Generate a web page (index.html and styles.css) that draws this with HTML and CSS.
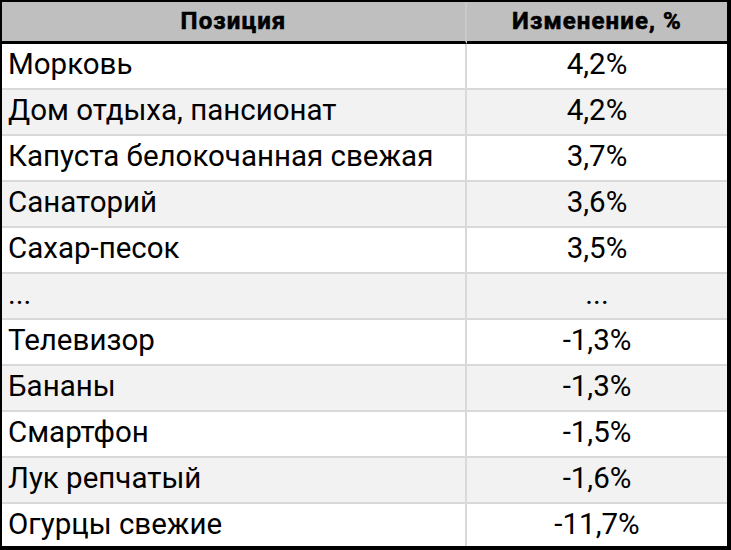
FILE: index.html
```html
<!DOCTYPE html>
<html lang="ru">
<head>
<meta charset="utf-8">
<link rel="stylesheet" href="styles.css">
</head>
<body>
<div class="frame">
<table class="grid">
<thead>
<tr><th class="c1">Позиция</th><th class="c2">Изменение, %</th></tr>
</thead>
<tbody>
<tr><td class="c1">Морковь</td><td class="c2">4,2%</td></tr>
<tr class="alt"><td class="c1">Дом отдыха, пансионат</td><td class="c2">4,2%</td></tr>
<tr><td class="c1">Капуста белокочанная свежая</td><td class="c2">3,7%</td></tr>
<tr class="alt"><td class="c1">Санаторий</td><td class="c2">3,6%</td></tr>
<tr><td class="c1">Сахар-песок</td><td class="c2">3,5%</td></tr>
<tr class="alt"><td class="c1">...</td><td class="c2">...</td></tr>
<tr><td class="c1">Телевизор</td><td class="c2">-1,3%</td></tr>
<tr class="alt"><td class="c1">Бананы</td><td class="c2">-1,3%</td></tr>
<tr><td class="c1">Смартфон</td><td class="c2">-1,5%</td></tr>
<tr class="alt"><td class="c1">Лук репчатый</td><td class="c2">-1,6%</td></tr>
<tr class="last"><td class="c1">Огурцы свежие</td><td class="c2">-11,7%</td></tr>
</tbody>
</table>
</div>
</body>
</html>
```
FILE: styles.css
```css
html, body {
  margin: 0;
  padding: 0;
  background: #ffffff;
}
.frame {
  width: 731px;
  height: 550px;
  box-sizing: border-box;
  border-style: solid;
  border-color: #000;
  border-width: 2px 4px 4px 2px;
  overflow: hidden;
}
.grid {
  width: 100%;
  border-collapse: separate;
  border-spacing: 0;
  font-family: Roboto, "Liberation Sans", sans-serif;
  color: #000;
  table-layout: fixed;
}
.grid th {
  background: #bfbfbf;
  height: 39px;
  padding: 0;
  font-size: 24px;
  line-height: 39px;
  font-weight: 700;
  letter-spacing: 1.1px;
  -webkit-text-stroke: 0.6px #000;
  text-align: center;
  border-bottom: 3px solid #000;
  box-sizing: border-box;
}
.grid th.c1 {
  width: 465px;
  border-right: 2px solid #c9c9c9;
}
.grid td {
  height: 44px;
  padding: 0 0 4px 6px;
  font-size: 29.5px;
  line-height: 40px;
  font-weight: 400;
  border-bottom: 2px solid #d9d9d9;
  white-space: nowrap;
  box-sizing: border-box;
}
.grid td.c1 {
  border-right: 2px solid #d9d9d9;
}
.grid td.c2 {
  text-align: center;
  padding-left: 0;
}
.grid tr.alt td {
  background: #f2f2f2;
}
.grid tr.last td {
  border-bottom: none;
}
```
